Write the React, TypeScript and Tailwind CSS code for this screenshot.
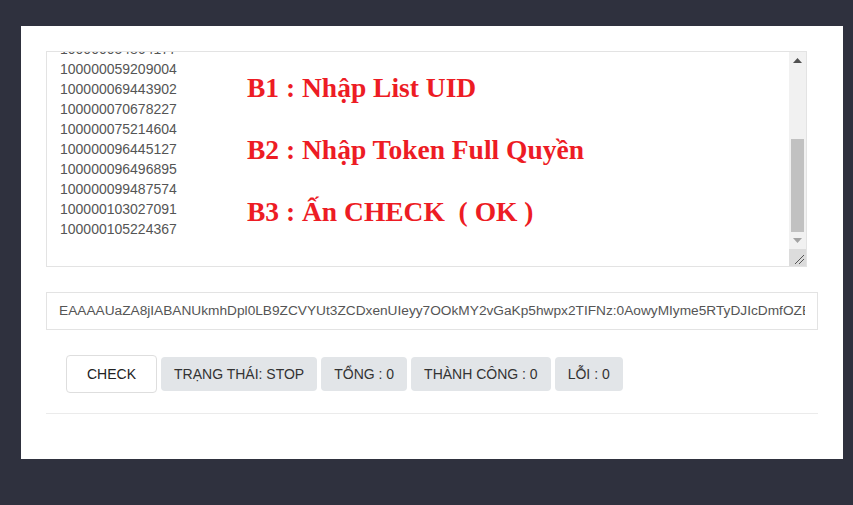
const uids = [
  "100000054864177",
  "100000059209004",
  "100000069443902",
  "100000070678227",
  "100000075214604",
  "100000096445127",
  "100000096496895",
  "100000099487574",
  "100000103027091",
  "100000105224367",
];

const steps = [
  "B1 : Nhập List UID",
  "B2 : Nhập Token Full Quyền",
  "B3 : Ấn CHECK  ( OK )",
];

const token =
  "EAAAAUaZA8jIABANUkmhDpl0LB9ZCVYUt3ZCDxenUIeyy7OOkMY2vGaKp5hwpx2TIFNz:0AowyMIyme5RTyDJIcDmfOZBxZCkLZA";

const stats = ["TRẠNG THÁI: STOP", "TỔNG : 0", "THÀNH CÔNG : 0", "LỖI : 0"];

const Scrollbar = () => (
  <div className="flex w-[17px] shrink-0 flex-col bg-[#f1f1f1]">
    <div className="flex h-[17px] items-center justify-center">
      <svg width="9" height="5" viewBox="0 0 9 5">
        <path d="M0 5 L4.5 0 L9 5 Z" fill="#505050" />
      </svg>
    </div>
    <div className="flex flex-1 flex-col px-[2px]">
      <div className="h-[70px]" />
      <div className="h-[93px] bg-[#c1c1c1]" />
    </div>
    <div className="flex h-[17px] items-center justify-center">
      <svg width="9" height="5" viewBox="0 0 9 5">
        <path d="M0 0 L4.5 5 L9 0 Z" fill="#a3a3a3" />
      </svg>
    </div>
    <div className="flex h-[17px] items-end justify-end bg-[#dcdcdc] p-[2px]">
      <svg width="10" height="10" viewBox="0 0 10 10">
        <path d="M1 10 L10 1 M5 10 L10 5" stroke="#555" strokeWidth="1" />
      </svg>
    </div>
  </div>
);

export default function App() {
  return (
    <div
      className="min-h-[505px] bg-[#2f313e] pl-[21px] pr-[10px] pt-[26px] pb-[46px]"
      style={{ fontFamily: '"Liberation Sans", Arial, sans-serif' }}
    >
      <div className="w-[822px] bg-white px-[25px] pt-[25px] pb-[45px]">
        <div className="relative flex h-[216px] w-[761px] border border-[#e3e3e3]">
          <div className="flex-1 overflow-hidden">
            <div className="-mt-[13px] pl-[13px] text-[14px] leading-[20px] text-[#555]">
              {uids.map((u) => (
                <div key={u}>{u}</div>
              ))}
            </div>
          </div>
          <Scrollbar />
          <div
            className="absolute left-[200px] top-[21px] flex flex-col gap-[32px] text-[27.5px] font-bold leading-[30px] text-[#ed1c24]"
            style={{ fontFamily: '"Liberation Serif", "Times New Roman", serif' }}
          >
            {steps.map((s) => (
              <div key={s} className="whitespace-pre">
                {s}
              </div>
            ))}
          </div>
        </div>

        <div className="mt-[25px] flex h-[38px] items-center border border-[#e3e3e3] px-[12px]">
          <div className="flex-1 overflow-hidden whitespace-nowrap text-[13.7px] text-[#555]">{token}</div>
        </div>

        <div className="mt-[25px] flex items-center gap-[4px] pl-[20px]">
          <button className="h-[38px] rounded-[4px] border border-[#dedede] bg-white px-[20px] text-[14px] text-[#222]">
            CHECK
          </button>
          {stats.map((s) => (
            <span
              key={s}
              className="flex h-[34px] items-center rounded-[4px] bg-[#e2e5e8] px-[13px] text-[14px] text-[#333]"
            >
              {s}
            </span>
          ))}
        </div>

        <div className="mt-[20px] h-px bg-[#ebebeb]" />
      </div>
    </div>
  );
}
